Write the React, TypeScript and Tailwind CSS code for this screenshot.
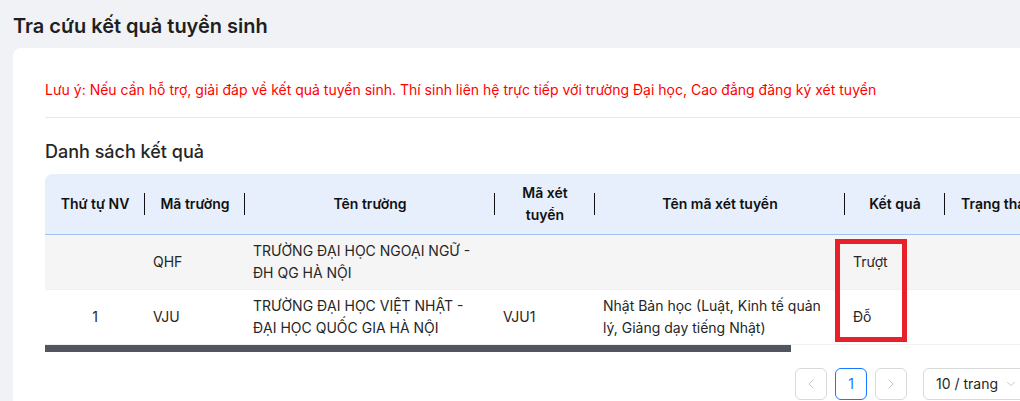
import { ChevronLeft, ChevronRight, ChevronDown } from "lucide-react";

const cols = [100, 100, 250, 100, 250, 100, 300];

const headers = ["Thứ tự NV", "Mã trường", "Tên trường", "Mã xét tuyển", "Tên mã xét tuyển", "Kết quả", "Trạng thái"];

const rows = [
    { nv: "", ma: "QHF", ten: "TRƯỜNG ĐẠI HỌC NGOẠI NGỮ - ĐH QG HÀ NỘI", maXt: "", tenXt: "", kq: "Trượt", tt: "", bg: "bg-[#f5f5f5]" },
    { nv: "1", ma: "VJU", ten: "TRƯỜNG ĐẠI HỌC VIỆT NHẬT - ĐẠI HỌC QUỐC GIA HÀ NỘI", maXt: "VJU1", tenXt: "Nhật Bản học (Luật, Kinh tế quản lý, Giảng dạy tiếng Nhật)", kq: "Đỗ", tt: "", bg: "bg-white" },
];

function ResultTable() {
    return (
        <div className="relative">
            <div className="overflow-hidden rounded-t-lg">
                <table className="table-fixed border-collapse w-[1200px] text-sm leading-[22px]">
                    <colgroup>
                        {cols.map((w, i) => (
                            <col key={i} style={{ width: w }} />
                        ))}
                    </colgroup>
                    <thead>
                        <tr className="bg-[#e6effb] border-b border-[#a3c1f0]">
                            {headers.map((h, i) => (
                                <th key={h} className={"relative px-2 py-2 font-semibold text-[#111] " + (i === 6 ? "text-left px-4" : "text-center")}>
                                    {h}
                                    {i < 6 && (
                                        <span className="absolute right-0 top-1/2 -translate-y-1/2 h-[22px] w-px bg-[#111]" />
                                    )}
                                </th>
                            ))}
                        </tr>
                    </thead>
                    <tbody>
                        {rows.map((r, i) => (
                            <tr key={i} className={r.bg + " border-b border-[#f0f0f0] text-[#262626]"}>
                                <td className="px-2 py-[5px] text-center">{r.nv}</td>
                                <td className="px-2 py-[5px]">{r.ma}</td>
                                <td className="px-2 py-[5px]">{r.ten}</td>
                                <td className="px-2 py-[5px]">{r.maXt}</td>
                                <td className="px-2 py-[5px]">{r.tenXt}</td>
                                <td className="px-2 py-[5px]">{r.kq}</td>
                                <td className="px-2 py-[5px]">{r.tt}</td>
                            </tr>
                        ))}
                    </tbody>
                </table>
            </div>
            {/* scrollbar */}
            <div className="h-[7px] w-[746px] bg-[#50555e]" />
            {/* highlight annotation */}
            <div className="absolute left-[790px] top-[65px] w-[72px] h-[103px] border-[5px] border-[#e8202a]" />
        </div>
    );
}

export default function App() {
    return (
        <div className="w-[1020px] h-[401px] overflow-hidden bg-[#f0f2f5] font-['Inter','Noto_Sans',sans-serif]">
            <div className="w-[1100px] pl-[13px]">
                <h1 className="pt-[14px] pb-[10px] text-xl leading-6 font-semibold text-[#1f1f1f]">
                    Tra cứu kết quả tuyển sinh
                </h1>
                <div className="w-[1046px] bg-white rounded-lg px-8 pt-[31px] pb-8">
                    <p className="text-sm leading-[22px] text-[#ff0000]">
                        Lưu ý: Nếu cần hỗ trợ, giải đáp về kết quả tuyển sinh. Thí sinh liên hệ trực tiếp với trường Đại học, Cao đẳng đăng ký xét tuyển
                    </p>
                    <div className="mt-4 h-px bg-[#e8e8e8]" />
                    <h2 className="mt-5 text-lg leading-7 font-medium text-[#262626]">Danh sách kết quả</h2>
                    <div className="mt-2">
                        <ResultTable />
                    </div>
                    <div className="mt-4 flex justify-end items-center gap-2">
                        <button className="w-8 h-8 flex items-center justify-center border border-[#d9d9d9] rounded-md text-[#c4c4c4]">
                            <ChevronLeft size={16} strokeWidth={1.5} />
                        </button>
                        <button className="w-8 h-8 flex items-center justify-center border border-[#1677ff] rounded-md text-[#1677ff] text-sm">
                            1
                        </button>
                        <button className="w-8 h-8 flex items-center justify-center border border-[#d9d9d9] rounded-md text-[#c4c4c4]">
                            <ChevronRight size={16} strokeWidth={1.5} />
                        </button>
                        <div className="ml-2 w-[104px] h-8 flex items-center justify-between border border-[#d9d9d9] rounded-md pl-3 pr-2 text-sm text-[#262626]">
                            <span>10 / trang</span>
                            <ChevronDown size={14} strokeWidth={1.5} className="text-[#bfbfbf]" />
                        </div>
                    </div>
                </div>
            </div>
        </div>
    );
}
